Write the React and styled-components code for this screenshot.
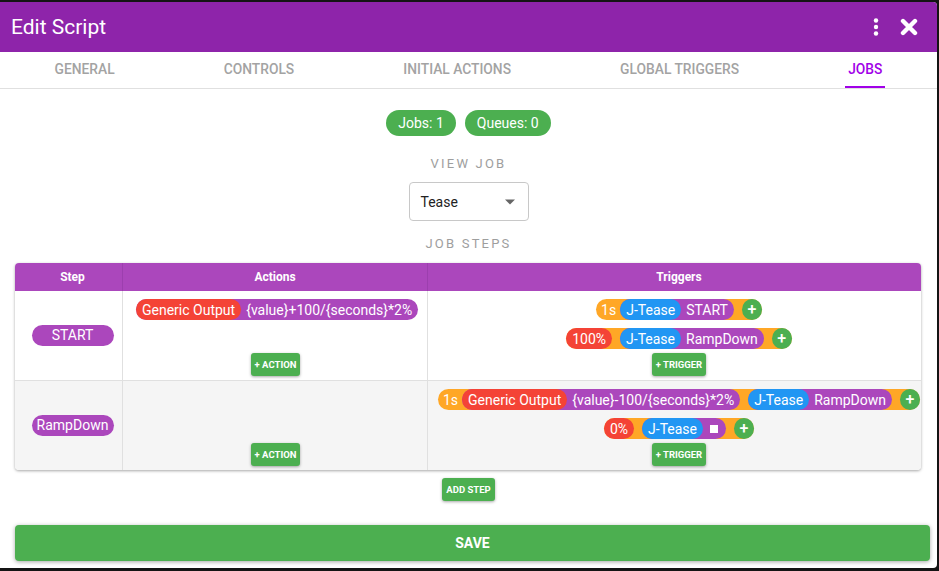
import React from 'react';
import styled, { createGlobalStyle } from 'styled-components';

const Global = createGlobalStyle`
  html, body {
    margin: 0;
    background: #141414;
    font-family: Roboto, "Liberation Sans", sans-serif;
  }
  * { box-sizing: border-box; }
`;

const Dialog = styled.div`
  width: 937px;
  height: 566px;
  margin-top: 2px;
  background: #fff;
  border-radius: 0 4px 4px 0;
  overflow: hidden;
  display: flex;
  flex-direction: column;
`;

const Header = styled.div`
  height: 50px;
  flex: none;
  background: #8e24aa;
  display: flex;
  align-items: center;
  justify-content: space-between;
  padding: 0 19px 0 11px;
  color: #fff;
`;

const Title = styled.div`
  font-size: 21px;
  font-weight: 400;
`;

const HeaderIcons = styled.div`
  display: flex;
  align-items: center;
  gap: 21px;
`;

const Tabs = styled.div`
  height: 37px;
  flex: none;
  display: flex;
  border-bottom: 1px solid #e0e0e0;
`;

const Tab = styled.div`
  flex: 1 1 auto;
  padding: 0 12px;
  display: flex;
  justify-content: center;
  font-size: 13.8px;
  font-weight: 500;
  color: ${p => (p.$active ? '#a100e8' : '#a3a3a3')};
`;

const TabLabel = styled.span`
  display: flex;
  align-items: center;
  padding: 0 3px;
  border-bottom: 2px solid ${p => (p.$active ? '#a100e8' : 'transparent')};
`;

const Content = styled.div`
  flex: 1;
  display: flex;
  flex-direction: column;
  align-items: center;
  padding-top: 21px;
`;

const Counts = styled.div`
  display: flex;
  gap: 9px;
`;

const CountChip = styled.div`
  height: 26px;
  line-height: 26px;
  padding: 0 12px;
  border-radius: 13px;
  background: #4caf50;
  color: #fff;
  font-size: 14px;
`;

const SectionLabel = styled.div`
  margin-top: ${p => p.$top}px;
  font-size: 13px;
  line-height: 16px;
  letter-spacing: 2.2px;
  color: #9e9e9e;
`;

const Select = styled.div`
  margin-top: 10px;
  width: 120px;
  height: 39px;
  border: 1px solid #c8c8c8;
  border-radius: 4px;
  display: flex;
  align-items: center;
  justify-content: space-between;
  padding: 0 12px 0 11px;
  font-size: 14px;
  color: #222;
`;

const TableBox = styled.div`
  align-self: stretch;
  margin: 11px 16px 0 15px;
  border-radius: 4px;
  box-shadow: 0 1px 3px rgba(0, 0, 0, 0.35);
  overflow: hidden;
`;

const Grid = styled.div`
  width: 915px;
  display: grid;
  grid-template-columns: 107px 305px 503px;
`;

const HeadCell = styled.div`
  height: 28px;
  background: #ab47bc;
  color: #fff;
  font-size: 12px;
  font-weight: 700;
  display: flex;
  align-items: center;
  justify-content: center;
  padding-left: ${p => p.$pl || 0}px;
  border-left: ${p => (p.$first ? 'none' : '1px solid #9c3fae')};
`;

const Cell = styled.div`
  background: ${p => (p.$alt ? '#f5f5f5' : '#fff')};
  border-bottom: ${p => (p.$last ? 'none' : '1px solid #e0e0e0')};
  border-left: ${p => (p.$first ? 'none' : '1px solid #e0e0e0')};
`;

const StepCell = styled(Cell)`
  display: flex;
  align-items: center;
  justify-content: center;
  padding-left: 8px;
`;

const ActionsCell = styled(Cell)`
  display: flex;
  flex-direction: column;
  justify-content: space-between;
  align-items: center;
  padding: 8px 12px 4px 13px;
  height: ${p => (p.$last ? 89 : 90)}px;
`;

const ActionsList = styled.div`
  align-self: flex-start;
  display: flex;
  flex-direction: column;
  gap: 8px;
`;

const TriggersCell = styled(Cell)`
  display: flex;
  flex-direction: column;
  align-items: center;
  padding: 8px 8px 4px;
  height: ${p => (p.$last ? 89 : 90)}px;
`;

const TriggerList = styled.div`
  display: flex;
  flex-direction: column;
  align-items: center;
  gap: 8px;
  margin-bottom: 4px;
`;

const StepPill = styled.div`
  width: 82px;
  height: 21px;
  line-height: 21px;
  border-radius: 11px;
  background: #ab47bc;
  color: #fff;
  font-size: 14px;
  text-align: center;
`;

const Pill = styled.span`
  display: inline-flex;
  align-items: center;
  height: 21px;
  border-radius: 11px;
  background: ${p => p.$bg};
  color: #fff;
  font-size: 14px;
  white-space: nowrap;
`;

const Label = styled(Pill)`
  padding: 0 6px;
`;

const Value = styled.span`
  padding: 0 6px 0 5px;
  display: inline-flex;
  align-items: center;
`;

const Trigger = styled(Pill)`
  background: #ffa726;
  gap: 8px;
`;

const Timer = styled.span`
  padding-left: 5px;
  margin-right: -4px;
`;

const Plus = styled.span`
  width: 20px;
  height: 21px;
  border-radius: 50%;
  background: #4caf50;
  display: flex;
  align-items: center;
  justify-content: center;
  font-size: 16px;
  font-weight: 500;
`;

const StopSquare = styled.span`
  width: 8px;
  height: 8px;
  background: #fff;
  margin: 0 2px;
`;

const SmallButton = styled.button`
  height: 23px;
  padding: 0 4px;
  border: none;
  border-radius: 3px;
  background: #4caf50;
  color: #fff;
  font-family: Roboto, "Liberation Sans", sans-serif;
  font-size: 9.5px;
  font-weight: 700;
  white-space: nowrap;
  box-shadow: 0 1px 3px rgba(0, 0, 0, 0.35);
  margin-top: ${p => p.$top || 0}px;
`;

const SaveButton = styled.button`
  align-self: stretch;
  margin: 24px 7px 0 15px;
  height: 36px;
  border: none;
  border-radius: 4px;
  background: #4caf50;
  color: #fff;
  font-family: Roboto, "Liberation Sans", sans-serif;
  font-size: 14px;
  font-weight: 700;
  box-shadow: 0 1px 4px rgba(0, 0, 0, 0.35);
`;

const tabs = ['General', 'Controls', 'Initial Actions', 'Global Triggers', 'Jobs'];

function Action({ label, color, children }) {
  return (
    <Pill $bg="#ab47bc">
      <Label $bg={color}>{label}</Label>
      <Value>{children}</Value>
    </Pill>
  );
}

function Kebab() {
  return (
    <svg width="6" height="18" viewBox="0 0 6 18">
      <circle cx="3" cy="2.5" r="2.2" fill="#fff" />
      <circle cx="3" cy="9" r="2.2" fill="#fff" />
      <circle cx="3" cy="15.5" r="2.2" fill="#fff" />
    </svg>
  );
}

function Close() {
  return (
    <svg width="18" height="18" viewBox="0 0 18 18">
      <path d="M3 3L15 15M15 3L3 15" stroke="#fff" strokeWidth="4.4" strokeLinecap="round" />
    </svg>
  );
}

export default function App() {
  return (
    <>
      <Global />
      <Dialog>
        <Header>
          <Title>Edit Script</Title>
          <HeaderIcons>
            <Kebab />
            <Close />
          </HeaderIcons>
        </Header>
        <Tabs>
          {tabs.map((t, i) => (
            <Tab key={t} $active={i === 4}>
              <TabLabel $active={i === 4}>{t.toUpperCase()}</TabLabel>
            </Tab>
          ))}
        </Tabs>
        <Content>
          <Counts>
            <CountChip>Jobs: 1</CountChip>
            <CountChip>Queues: 0</CountChip>
          </Counts>
          <SectionLabel $top={20}>VIEW JOB</SectionLabel>
          <Select>
            <span>Tease</span>
            <svg width="12" height="6" viewBox="0 0 12 6">
              <path d="M1 0.5L6 5.5L11 0.5Z" fill="#666" />
            </svg>
          </Select>
          <SectionLabel $top={15}>JOB STEPS</SectionLabel>
          <TableBox>
            <Grid>
              <HeadCell $first $pl={8}>Step</HeadCell>
              <HeadCell>Actions</HeadCell>
              <HeadCell>Triggers</HeadCell>

              <StepCell $first><StepPill>START</StepPill></StepCell>
              <ActionsCell>
                <ActionsList>
                  <Action label="Generic Output" color="#f44336">{'{value}+100/{seconds}*2%'}</Action>
                </ActionsList>
                <SmallButton>+ ACTION</SmallButton>
              </ActionsCell>
              <TriggersCell>
                <TriggerList>
                  <Trigger>
                    <Timer>1s</Timer>
                    <Action label="J-Tease" color="#2196f3">START</Action>
                    <Plus>+</Plus>
                  </Trigger>
                  <Trigger>
                    <Label $bg="#f44336">100%</Label>
                    <Action label="J-Tease" color="#2196f3">RampDown</Action>
                    <Plus>+</Plus>
                  </Trigger>
                </TriggerList>
                <SmallButton>+ TRIGGER</SmallButton>
              </TriggersCell>

              <StepCell $first $alt $last><StepPill>RampDown</StepPill></StepCell>
              <ActionsCell $alt $last>
                <ActionsList />
                <SmallButton>+ ACTION</SmallButton>
              </ActionsCell>
              <TriggersCell $alt $last>
                <TriggerList>
                  <Trigger>
                    <Timer>1s</Timer>
                    <Action label="Generic Output" color="#f44336">{'{value}-100/{seconds}*2%'}</Action>
                    <Action label="J-Tease" color="#2196f3">RampDown</Action>
                    <Plus>+</Plus>
                  </Trigger>
                  <Trigger>
                    <Label $bg="#f44336">0%</Label>
                    <Action label="J-Tease" color="#2196f3"><StopSquare /></Action>
                    <Plus>+</Plus>
                  </Trigger>
                </TriggerList>
                <SmallButton>+ TRIGGER</SmallButton>
              </TriggersCell>
            </Grid>
          </TableBox>
          <SmallButton $top={8}>ADD STEP</SmallButton>
          <SaveButton>SAVE</SaveButton>
        </Content>
      </Dialog>
    </>
  );
}
